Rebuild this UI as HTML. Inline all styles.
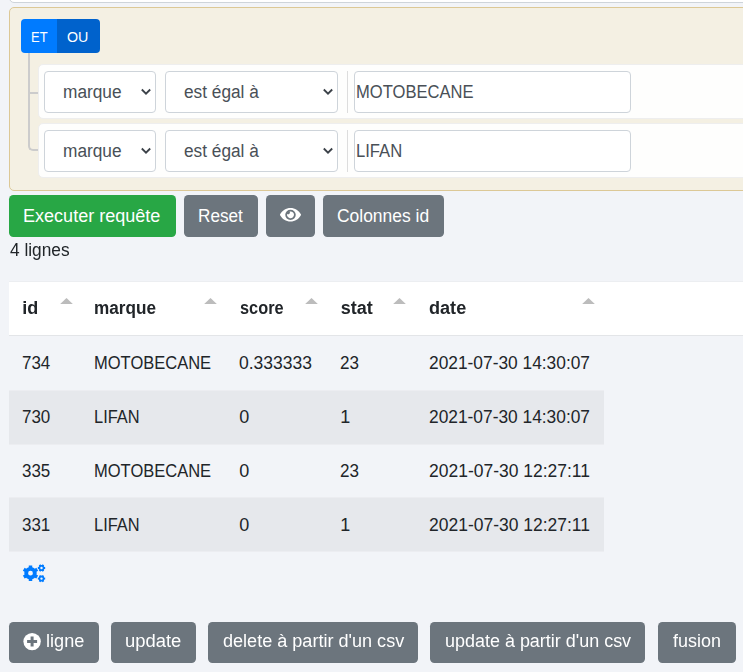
<!DOCTYPE html>
<html><head><meta charset="utf-8"><style>
html,body{margin:0;padding:0;width:743px;height:672px;overflow:hidden;background:#f2f4f8;font-family:"Liberation Sans",sans-serif;}
.b{position:absolute;box-sizing:border-box;}
.t{position:absolute;white-space:nowrap;transform-origin:0 0;}
</style></head><body>
<div class="b" style="left:9px;top:-40px;width:792px;height:43px;background:#fff;border:1px solid #ced4da;border-radius:5px;"></div>
<div class="b" style="left:9px;top:7px;width:792px;height:184px;background:#f4f0e3;border:1px solid #dcc896;border-radius:5px;"></div>
<div class="b" style="left:21px;top:19px;width:36px;height:34px;background:#007bff;border-radius:4px 0 0 4px;"></div>
<div class="b" style="left:57px;top:19px;width:43px;height:34px;background:#0062cc;border-radius:0 4px 4px 0;"></div>
<div class="t" style="left:30.90px;top:29.75px;font-size:14.00px;line-height:14.00px;color:#fff;transform:scaleX(0.9284);">ET</div>
<div class="t" style="left:67.20px;top:29.75px;font-size:14.00px;line-height:14.00px;color:#fff;transform:scaleX(1.0190);">OU</div>
<div class="b" style="left:28px;top:53px;width:2px;height:88px;background:#ccc;"></div>
<div class="b" style="left:28px;top:53px;width:10px;height:41px;border-left:2px solid #ccc;border-bottom:2px solid #ccc;"></div>
<div class="b" style="left:28px;top:100px;width:10px;height:51px;border-left:2px solid #ccc;border-bottom:2px solid #ccc;border-radius:0 0 0 5px;"></div>
<div class="b" style="left:38px;top:64px;width:763px;height:55px;background:rgba(255,255,255,.9);border:1px solid #eee;border-radius:5px;"></div>
<div class="b" style="left:44px;top:71px;width:112px;height:42px;background:#fff;border:1px solid #ced4da;border-radius:4px;"></div>
<div class="b" style="left:165px;top:71px;width:173px;height:42px;background:#fff;border:1px solid #ced4da;border-radius:4px;"></div>
<div class="b" style="left:347px;top:71px;width:1px;height:42px;background:#ddd;"></div>
<div class="b" style="left:354px;top:71px;width:277px;height:42px;background:#fff;border:1px solid #ced4da;border-radius:4px;"></div>
<div class="t" style="left:62.80px;top:82.66px;font-size:18.00px;line-height:18.00px;color:#495057;transform:scaleX(0.9600);">marque</div>
<div class="t" style="left:184.20px;top:82.66px;font-size:18.00px;line-height:18.00px;color:#495057;transform:scaleX(0.9582);">est égal à</div>
<div class="t" style="left:356.40px;top:82.56px;font-size:18.00px;line-height:18.00px;color:#495057;transform:scaleX(0.9203);">MOTOBECANE</div>
<svg class="b" style="left:140.0px;top:88.0px" width="12" height="8" viewBox="0 0 12 8"><path d="M1.8 1.5 L6 5.7 L10.2 1.5" fill="none" stroke="#3b4148" stroke-width="1.8"/></svg>
<svg class="b" style="left:321.8px;top:88.0px" width="12" height="8" viewBox="0 0 12 8"><path d="M1.8 1.5 L6 5.7 L10.2 1.5" fill="none" stroke="#3b4148" stroke-width="1.8"/></svg>
<div class="b" style="left:38px;top:123px;width:763px;height:55px;background:rgba(255,255,255,.9);border:1px solid #eee;border-radius:5px;"></div>
<div class="b" style="left:44px;top:130px;width:112px;height:42px;background:#fff;border:1px solid #ced4da;border-radius:4px;"></div>
<div class="b" style="left:165px;top:130px;width:173px;height:42px;background:#fff;border:1px solid #ced4da;border-radius:4px;"></div>
<div class="b" style="left:347px;top:130px;width:1px;height:42px;background:#ddd;"></div>
<div class="b" style="left:354px;top:130px;width:277px;height:42px;background:#fff;border:1px solid #ced4da;border-radius:4px;"></div>
<div class="t" style="left:62.80px;top:141.66px;font-size:18.00px;line-height:18.00px;color:#495057;transform:scaleX(0.9600);">marque</div>
<div class="t" style="left:184.20px;top:141.66px;font-size:18.00px;line-height:18.00px;color:#495057;transform:scaleX(0.9582);">est égal à</div>
<div class="t" style="left:356.40px;top:141.56px;font-size:18.00px;line-height:18.00px;color:#495057;transform:scaleX(0.9236);">LIFAN</div>
<svg class="b" style="left:140.0px;top:147.0px" width="12" height="8" viewBox="0 0 12 8"><path d="M1.8 1.5 L6 5.7 L10.2 1.5" fill="none" stroke="#3b4148" stroke-width="1.8"/></svg>
<svg class="b" style="left:321.8px;top:147.0px" width="12" height="8" viewBox="0 0 12 8"><path d="M1.8 1.5 L6 5.7 L10.2 1.5" fill="none" stroke="#3b4148" stroke-width="1.8"/></svg>
<div class="b" style="left:9px;top:195px;width:167px;height:42px;background:#28a745;border-radius:4.4px;"></div>
<div class="t" style="left:22.80px;top:206.76px;font-size:18.00px;line-height:18.00px;color:#fff;transform:scaleX(1.0023);">Executer requête</div>
<div class="b" style="left:184px;top:195px;width:74px;height:42px;background:#6c757d;border-radius:4.4px;"></div>
<div class="t" style="left:198.00px;top:206.76px;font-size:18.00px;line-height:18.00px;color:#fff;transform:scaleX(0.9528);">Reset</div>
<div class="b" style="left:266px;top:195px;width:49px;height:42px;background:#6c757d;border-radius:4.4px;"></div>
<svg class="b" style="left:280px;top:208.3px" width="21" height="13.6" viewBox="0 64 576 384" preserveAspectRatio="none"><path fill="#fff" d="M572.52 241.4C518.29 135.59 410.93 64 288 64S57.68 135.64 3.48 241.41a32.35 32.35 0 0 0 0 29.19C57.71 376.41 165.07 448 288 448s230.32-71.64 284.52-177.41a32.35 32.35 0 0 0 0-29.19zM288 400a144 144 0 1 1 144-144 143.93 143.93 0 0 1-144 144zm0-240a95.31 95.31 0 0 0-25.31 3.79 47.85 47.85 0 0 1-66.9 66.9A95.78 95.78 0 1 0 288 160z"/></svg>
<div class="b" style="left:323px;top:195px;width:121px;height:42px;background:#6c757d;border-radius:4.4px;"></div>
<div class="t" style="left:337.00px;top:206.76px;font-size:18.00px;line-height:18.00px;color:#fff;transform:scaleX(0.9689);">Colonnes id</div>
<div class="t" style="left:10.00px;top:240.76px;font-size:18.00px;line-height:18.00px;color:#212529;transform:scaleX(0.9607);">4 lignes</div>
<div class="b" style="left:9px;top:281px;width:792px;height:55px;background:#fff;border-top:1px solid #eceef1;border-bottom:1px solid #e3e5e8;"></div>
<div class="t" style="left:22.30px;top:298.96px;font-size:18.00px;line-height:18.00px;color:#212529;font-weight:bold;">id</div>
<svg class="b" style="left:59.6px;top:297.6px" width="13" height="7" viewBox="0 0 13 7"><path d="M0.2 6 L6.5 0.1 L12.8 6Z" fill="#bcbcbc"/></svg>
<div class="t" style="left:93.60px;top:298.96px;font-size:18.00px;line-height:18.00px;color:#212529;font-weight:bold;transform:scaleX(0.9536);">marque</div>
<svg class="b" style="left:203.9px;top:297.6px" width="13" height="7" viewBox="0 0 13 7"><path d="M0.2 6 L6.5 0.1 L12.8 6Z" fill="#bcbcbc"/></svg>
<div class="t" style="left:239.70px;top:298.96px;font-size:18.00px;line-height:18.00px;color:#212529;font-weight:bold;transform:scaleX(0.9076);">score</div>
<svg class="b" style="left:305.3px;top:297.6px" width="13" height="7" viewBox="0 0 13 7"><path d="M0.2 6 L6.5 0.1 L12.8 6Z" fill="#bcbcbc"/></svg>
<div class="t" style="left:340.80px;top:298.96px;font-size:18.00px;line-height:18.00px;color:#212529;font-weight:bold;">stat</div>
<svg class="b" style="left:393.1px;top:297.6px" width="13" height="7" viewBox="0 0 13 7"><path d="M0.2 6 L6.5 0.1 L12.8 6Z" fill="#bcbcbc"/></svg>
<div class="t" style="left:428.60px;top:298.96px;font-size:18.00px;line-height:18.00px;color:#212529;font-weight:bold;transform:scaleX(1.0049);">date</div>
<svg class="b" style="left:582.3px;top:297.6px" width="13" height="7" viewBox="0 0 13 7"><path d="M0.2 6 L6.5 0.1 L12.8 6Z" fill="#bcbcbc"/></svg>
<div class="t" style="left:22.20px;top:353.96px;font-size:18.00px;line-height:18.00px;color:#212529;transform:scaleX(0.9421);">734</div>
<div class="t" style="left:93.50px;top:353.96px;font-size:18.00px;line-height:18.00px;color:#212529;transform:scaleX(0.9171);">MOTOBECANE</div>
<div class="t" style="left:239.20px;top:353.96px;font-size:18.00px;line-height:18.00px;color:#212529;transform:scaleX(0.9723);">0.333333</div>
<div class="t" style="left:340.20px;top:353.96px;font-size:18.00px;line-height:18.00px;color:#212529;transform:scaleX(0.9491);">23</div>
<div class="t" style="left:428.80px;top:353.96px;font-size:18.00px;line-height:18.00px;color:#212529;transform:scaleX(0.9633);">2021-07-30 14:30:07</div>
<div class="b" style="left:9px;top:390px;width:595px;height:55px;background:#e6e8ec;border-top:1px solid #ecedf1;border-bottom:1px solid #ecedf1;"></div>
<div class="t" style="left:22.20px;top:407.66px;font-size:18.00px;line-height:18.00px;color:#212529;transform:scaleX(0.9421);">730</div>
<div class="t" style="left:93.50px;top:407.66px;font-size:18.00px;line-height:18.00px;color:#212529;transform:scaleX(0.9116);">LIFAN</div>
<div class="t" style="left:239.20px;top:407.66px;font-size:18.00px;line-height:18.00px;color:#212529;">0</div>
<div class="t" style="left:340.20px;top:407.66px;font-size:18.00px;line-height:18.00px;color:#212529;">1</div>
<div class="t" style="left:428.80px;top:407.66px;font-size:18.00px;line-height:18.00px;color:#212529;transform:scaleX(0.9633);">2021-07-30 14:30:07</div>
<div class="t" style="left:22.20px;top:461.86px;font-size:18.00px;line-height:18.00px;color:#212529;transform:scaleX(0.9421);">335</div>
<div class="t" style="left:93.50px;top:461.86px;font-size:18.00px;line-height:18.00px;color:#212529;transform:scaleX(0.9171);">MOTOBECANE</div>
<div class="t" style="left:239.20px;top:461.86px;font-size:18.00px;line-height:18.00px;color:#212529;">0</div>
<div class="t" style="left:340.20px;top:461.86px;font-size:18.00px;line-height:18.00px;color:#212529;transform:scaleX(0.9491);">23</div>
<div class="t" style="left:428.80px;top:461.86px;font-size:18.00px;line-height:18.00px;color:#212529;transform:scaleX(0.9710);">2021-07-30 12:27:11</div>
<div class="b" style="left:9px;top:497px;width:595px;height:55px;background:#e6e8ec;border-top:1px solid #ecedf1;border-bottom:1px solid #ecedf1;"></div>
<div class="t" style="left:22.20px;top:515.76px;font-size:18.00px;line-height:18.00px;color:#212529;transform:scaleX(0.9421);">331</div>
<div class="t" style="left:93.50px;top:515.76px;font-size:18.00px;line-height:18.00px;color:#212529;transform:scaleX(0.9116);">LIFAN</div>
<div class="t" style="left:239.20px;top:515.76px;font-size:18.00px;line-height:18.00px;color:#212529;">0</div>
<div class="t" style="left:340.20px;top:515.76px;font-size:18.00px;line-height:18.00px;color:#212529;">1</div>
<div class="t" style="left:428.80px;top:515.76px;font-size:18.00px;line-height:18.00px;color:#212529;transform:scaleX(0.9710);">2021-07-30 12:27:11</div>
<svg class="b" style="left:0;top:0" width="743" height="672" viewBox="0 0 743 672"><path fill="#007bff" fill-rule="evenodd" d="M32.90 567.48 L32.23 567.25 L32.25 565.39 L28.75 565.39 L28.77 567.25 L28.10 567.48 L26.75 568.26 L26.21 568.73 L24.61 567.78 L22.87 570.81 L24.48 571.72 L24.35 572.42 L24.35 573.98 L24.48 574.68 L22.87 575.59 L24.61 578.62 L26.21 577.67 L26.75 578.14 L28.10 578.92 L28.77 579.15 L28.75 581.01 L32.25 581.01 L32.23 579.15 L32.90 578.92 L34.25 578.14 L34.79 577.67 L36.39 578.62 L38.13 575.59 L36.52 574.68 L36.65 573.98 L36.65 572.42 L36.52 571.72 L38.13 570.81 L36.39 567.78 L34.79 568.73 L34.25 568.26Z M28.10 573.20 a2.40 2.40 0 1 0 4.80 0 a2.40 2.40 0 1 0 -4.80 0Z M44.27 569.16 L44.34 568.96 L45.17 568.98 L45.17 567.02 L44.34 567.04 L44.27 566.84 L43.89 566.19 L43.75 566.02 L44.19 565.31 L42.48 564.33 L42.09 565.06 L41.88 565.02 L41.12 565.02 L40.91 565.06 L40.52 564.33 L38.81 565.31 L39.25 566.02 L39.11 566.19 L38.73 566.84 L38.66 567.04 L37.83 567.02 L37.83 568.98 L38.66 568.96 L38.73 569.16 L39.11 569.81 L39.25 569.98 L38.81 570.69 L40.52 571.67 L40.91 570.94 L41.12 570.98 L41.88 570.98 L42.09 570.94 L42.48 571.67 L44.19 570.69 L43.75 569.98 L43.89 569.81Z M40.30 568.00 a1.20 1.20 0 1 0 2.40 0 a1.20 1.20 0 1 0 -2.40 0Z M44.27 579.76 L44.34 579.56 L45.17 579.58 L45.17 577.62 L44.34 577.64 L44.27 577.44 L43.89 576.79 L43.75 576.62 L44.19 575.91 L42.48 574.93 L42.09 575.66 L41.88 575.62 L41.12 575.62 L40.91 575.66 L40.52 574.93 L38.81 575.91 L39.25 576.62 L39.11 576.79 L38.73 577.44 L38.66 577.64 L37.83 577.62 L37.83 579.58 L38.66 579.56 L38.73 579.76 L39.11 580.41 L39.25 580.58 L38.81 581.29 L40.52 582.27 L40.91 581.54 L41.12 581.58 L41.88 581.58 L42.09 581.54 L42.48 582.27 L44.19 581.29 L43.75 580.58 L43.89 580.41Z M40.30 578.60 a1.20 1.20 0 1 0 2.40 0 a1.20 1.20 0 1 0 -2.40 0Z"/></svg>
<div class="b" style="left:9px;top:622px;width:90px;height:41px;background:#6c757d;border-radius:4.4px;"></div>
<svg class="b" style="left:22px;top:632px" width="20" height="20" viewBox="0 0 20 20"><circle cx="10.1" cy="9.6" r="8.7" fill="#fff"/><path d="M10.1 4.6v10M5.1 9.6h10" stroke="#6c757d" stroke-width="3"/></svg>
<div class="t" style="left:45.70px;top:632.36px;font-size:18.00px;line-height:18.00px;color:#fff;transform:scaleX(1.0068);">ligne</div>
<div class="b" style="left:111px;top:622px;width:85px;height:41px;background:#6c757d;border-radius:4.4px;"></div>
<div class="t" style="left:125.20px;top:632.36px;font-size:18.00px;line-height:18.00px;color:#fff;transform:scaleX(1.0225);">update</div>
<div class="b" style="left:208px;top:622px;width:210px;height:41px;background:#6c757d;border-radius:4.4px;"></div>
<div class="t" style="left:222.70px;top:632.36px;font-size:18.00px;line-height:18.00px;color:#fff;transform:scaleX(1.0037);">delete à partir d'un csv</div>
<div class="b" style="left:430px;top:622px;width:215px;height:41px;background:#6c757d;border-radius:4.4px;"></div>
<div class="t" style="left:445.20px;top:632.36px;font-size:18.00px;line-height:18.00px;color:#fff;transform:scaleX(0.9976);">update à partir d'un csv</div>
<div class="b" style="left:658px;top:622px;width:78px;height:41px;background:#6c757d;border-radius:4.4px;"></div>
<div class="t" style="left:673.00px;top:632.36px;font-size:18.00px;line-height:18.00px;color:#fff;transform:scaleX(0.9971);">fusion</div>
</body></html>
